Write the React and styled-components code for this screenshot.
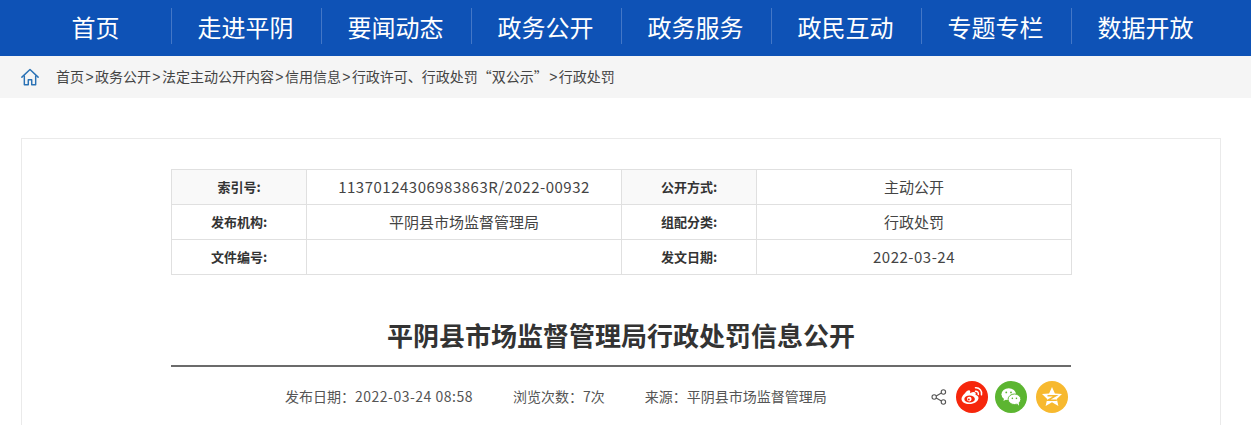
import styled, { createGlobalStyle } from "styled-components";

const navItems = ["首页", "走进平阴", "要闻动态", "政务公开", "政务服务", "政民互动", "专题专栏", "数据开放"];
const crumbs = ["首页", "政务公开", "法定主动公开内容", "信用信息", "行政许可、行政处罚“双公示”", "行政处罚"];

const rows = [
    ["索引号:", "11370124306983863R/2022-00932", "公开方式:", "主动公开", true],
    ["发布机构:", "平阴县市场监督管理局", "组配分类:", "行政处罚"],
    ["文件编号:", "", "发文日期:", "2022-03-24"],
];

const isNumber = (text) => /^\d/.test(text);

const App = () => {
    return (
        <Page>
            <GlobalStyle />
            <Nav>
                {navItems.map((item, i) => (
                    <NavItem key={item} $first={i === 0}>{item}</NavItem>
                ))}
            </Nav>
            <Crumbs>
                <HomeIcon viewBox="0 0 20 20" fill="none" stroke="#2a72b5" strokeWidth="1.6" strokeLinejoin="round" strokeLinecap="round">
                    <path d="M1 9.6 10 1.2l9 8.4" />
                    <path d="M3.7 8.2v9.9h4.4v-5.6h3.800v5.6h4.400V8.200" />
                </HomeIcon>
                <CrumbText>
                    {crumbs.map((c, i) => (
                        <span key={c}>{i > 0 && <Sep>&gt;</Sep>}{c}</span>
                    ))}
                </CrumbText>
            </Crumbs>
            <Card>
                <InfoTable>
                    <colgroup>
                        <col width="135" />
                        <col width="315" />
                        <col width="135" />
                        <col width="315" />
                    </colgroup>
                    <tbody>
                        {rows.map((r) => (
                            <tr key={r[0]}>
                                <Label $shade={r[4]}>{r[0]}</Label>
                                <Value $wide={isNumber(r[1])}>{r[1]}</Value>
                                <Label $shade={r[4]}>{r[2]}</Label>
                                <Value $wide={isNumber(r[3])}>{r[3]}</Value>
                            </tr>
                        ))}
                    </tbody>
                </InfoTable>
                <Title>平阴县市场监督管理局行政处罚信息公开</Title>
                <MetaBar>
                    <MetaText>
                        <span>发布日期：<Latin>2022-03-24 08:58</Latin></span>
                        <span>浏览次数：7次</span>
                        <span>来源：平阴县市场监督管理局</span>
                    </MetaText>
                    <Share>
                        <ShareIcon viewBox="0 0 16 16" fill="none" stroke="#555" strokeWidth="1.1">
                            <circle cx="3.2" cy="8" r="2.2" />
                            <circle cx="12.4" cy="3" r="2.2" />
                            <circle cx="12.4" cy="13" r="2.2" />
                            <path d="M5.2 7 10.4 4M5.2 9l5.2 3" />
                        </ShareIcon>
                        <Round $bg="#f6270c">
                            <svg width="24" height="22" viewBox="0 0 24 22">
                                <path fill="#fff" d="M10 7.200c2.600-1.400 4.800-1.500 5.500-.4.400.7.300 1.500 0 2.300 1.600.3 3 1.200 3 2.800 0 3-4.100 6.100-9.300 6.100-4.100 0-7.700-1.900-7.700-5 0-1.700 1.100-3.600 3-5.300C6.400 5 8.400 4 9.500 4.400c.9.300 1 1.400.5 2.800Z" />
                                <ellipse cx="9.600" cy="13" rx="5.300" ry="3.600" fill="#f6270c" />
                                <circle cx="9.300" cy="13.100" r="2.300" fill="#fff" />
                                <circle cx="8.800" cy="13.400" r="1" fill="#f6270c" />
                                <path fill="none" stroke="#fff" strokeWidth="1.500" strokeLinecap="round" d="M15.500 5.200c1.800-.2 3.200 1.200 2.800 3.200M15.500 1.800c4-.3 6.900 2.900 6 7" />
                            </svg>
                        </Round>
                        <Round $bg="#5cb531" $gap={7}>
                            <svg width="22" height="20" viewBox="0 0 24 22">
                                <ellipse cx="9.500" cy="8" rx="8" ry="6.700" fill="#fff" />
                                <path fill="#fff" d="m4.500 12-.8 3.500 4-2.200Z" />
                                <circle cx="6.800" cy="6" r="1" fill="#5cb531" />
                                <circle cx="12" cy="6" r="1" fill="#5cb531" />
                                <ellipse cx="15.800" cy="13.500" rx="7" ry="5.800" fill="#fff" stroke="#5cb531" strokeWidth="1" />
                                <path fill="#fff" d="m18.500 18 2.300 2.500-.3-4Z" />
                                <circle cx="13.500" cy="12.500" r=".9" fill="#5cb531" />
                                <circle cx="18" cy="12.500" r=".9" fill="#5cb531" />
                            </svg>
                        </Round>
                        <Round $bg="#f7b92f" $gap={9}>
                            <svg width="22" height="22" viewBox="0 0 22 22">
                                <path fill="#fff" d="M11 1l2.900 6.500 7.100.5-5.200 4.900 1.600 7L11 16.300l-6.400 3.600 1.600-7L1 8l7.100-.5Z" />
                                <path fill="none" stroke="#f7b92f" strokeWidth="1.500" d="M6.500 9.700h8.300l-8 4.600h9" />
                            </svg>
                        </Round>
                    </Share>
                </MetaBar>
            </Card>
        </Page>
    );
}

export default App;

const GlobalStyle = createGlobalStyle`
  html, body {
    margin: 0;
    padding: 0;
    background: #fff;
    overflow: hidden;
  }
`;

const Page = styled.div`
  width: 1251px;
  height: 425px;
  overflow: hidden;
  font-family: "Noto Sans CJK SC", "Liberation Sans", sans-serif;
  color: #333;
`;

const Nav = styled.div`
  display: flex;
  align-items: flex-start;
  height: 56px;
  padding: 8px 0 0 21px;
  box-sizing: border-box;
  background: #0e52b6;
`;

const NavItem = styled.div`
  width: 150px;
  height: 36px;
  padding-right: 2px;
  border-left: 1px solid ${(p) => (p.$first ? "transparent" : "#4377c7")};
  box-sizing: border-box;
  line-height: 37px;
  text-align: center;
  font-size: 24px;
  color: #fff;
`;

const Crumbs = styled.div`
  display: flex;
  align-items: center;
  height: 42px;
  padding-left: 21px;
  background: #f5f5f5;
  font-size: 14px;
  color: #444;
`;

const HomeIcon = styled.svg`
  width: 18px;
  height: 19px;
  margin-right: 17px;
`;

const CrumbText = styled.div`
  margin-top: -2px;
  white-space: nowrap;
`;

const Sep = styled.span`
  margin: 0 1.4px;
  font-family: "Liberation Sans", sans-serif;
`;

const Card = styled.div`
  margin: 40px 0 0 21px;
  width: 1200px;
  height: 400px;
  box-sizing: border-box;
  padding: 30px 149px 0;
  border: 1px solid #eaeaea;
`;

const InfoTable = styled.table`
  width: 900px;
  border-collapse: collapse;
  table-layout: fixed;

  & td {
    height: 35px;
    padding: 0 0 2px;
    box-sizing: border-box;
    border: 1px solid #e0e0e0;
    text-align: center;
  }
`;

const Label = styled.td`
  font-size: 13px;
  font-weight: 700;
  background: ${(p) => (p.$shade ? "#f9f9f9" : "#fff")};
`;

const Value = styled.td`
  font-size: 15px;
  letter-spacing: ${(p) => (p.$wide ? "0.5px" : "0")};
  color: #444;
`;

const Title = styled.h1`
  width: 900px;
  height: 52px;
  margin: 34px 0 0;
  padding-bottom: 4px;
  border-bottom: 2px solid #6b6b6b;
  text-align: center;
  font-size: 26px;
  line-height: 52px;
  font-weight: 700;
`;

const MetaBar = styled.div`
  display: flex;
  align-items: center;
  justify-content: space-between;
  width: 900px;
  height: 60px;
`;

const MetaText = styled.div`
  display: flex;
  gap: 40px;
  margin: -2px 0 0 114px;
  font-size: 14px;
  color: #555;
  white-space: nowrap;
`;

const Latin = styled.span`
  letter-spacing: 0.5px;
`;

const Share = styled.div`
  display: flex;
  align-items: center;
  margin-right: 3px;
`;

const ShareIcon = styled.svg`
  width: 16px;
  height: 16px;
  margin-right: 9px;
`;

const Round = styled.div`
  display: flex;
  align-items: center;
  justify-content: center;
  width: 32px;
  height: 32px;
  margin-left: ${(p) => p.$gap || 0}px;
  border-radius: 50%;
  background: ${(p) => p.$bg};
`;
